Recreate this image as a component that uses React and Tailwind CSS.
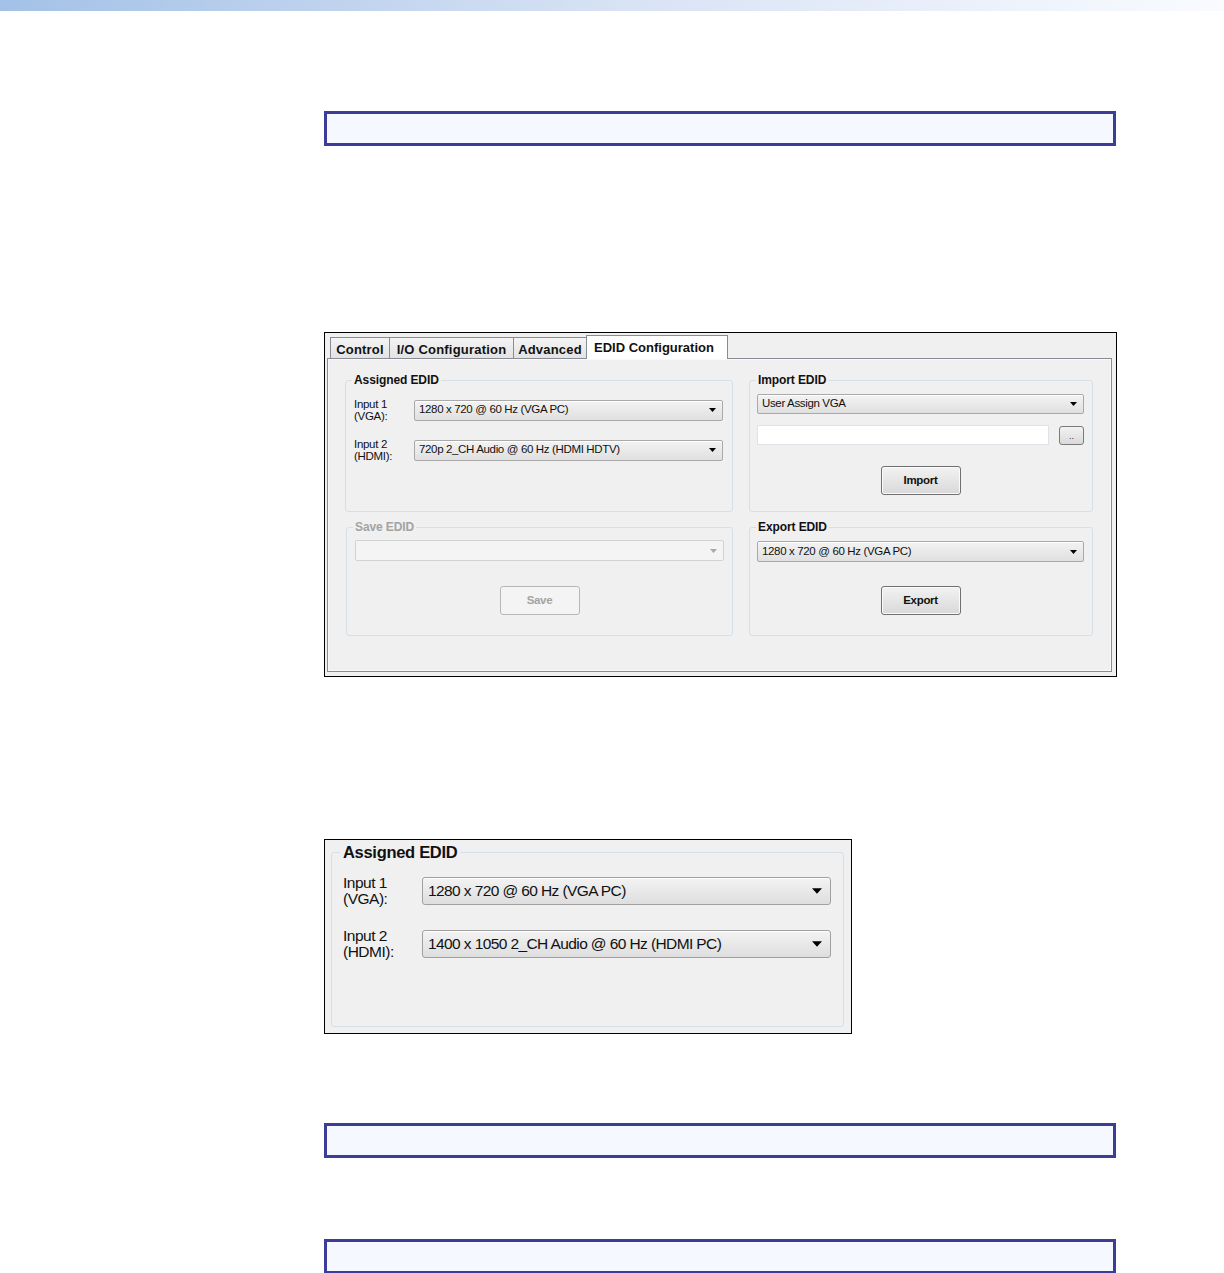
import React from "react";

const font = "font-['Liberation_Sans',Arial,sans-serif]";

function Arrow({ color = "#000", w = 7, h = 4 }) {
  return (
    <svg width={w} height={h} viewBox="0 0 7 4" className="shrink-0">
      <path d="M0 0 H7 L3.5 4 Z" fill={color} />
    </svg>
  );
}

function Combo({ text, h = "h-[21px]", disabled }) {
  if (disabled) {
    return (
      <div className={`${h} border border-[#d2d2d2] rounded-[2px] bg-[#f4f4f4] flex items-center justify-end pr-[6px]`}>
        <Arrow color="#a8a8a8" />
      </div>
    );
  }
  return (
    <div className={`${h} border border-[#a9a9a9] rounded-[2px] bg-linear-to-b from-[#f3f3f3] to-[#e0e0e0] flex items-center pl-[4px] pr-[6px] text-[11.5px] tracking-[-0.35px] text-[#111] shadow-[inset_0_1px_0_#fff]`}>
      <span className="flex-1 whitespace-nowrap">{text}</span>
      <Arrow />
    </div>
  );
}

function BigCombo({ text }) {
  return (
    <div className="h-[28px] border border-[#a0a0a0] rounded-[3px] bg-linear-to-b from-[#f3f3f3] to-[#dedede] flex items-center pl-[5px] pr-[8px] text-[15.5px] tracking-[-0.6px] text-[#111] shadow-[inset_0_1px_0_#fff]">
      <span className="flex-1 whitespace-nowrap">{text}</span>
      <Arrow w={10} h={6} />
    </div>
  );
}

function Btn({ label, disabled }) {
  if (disabled) {
    return (
      <div className="w-[80px] h-[29px] mx-auto border border-[#b5b8bb] rounded-[3px] bg-[#f4f4f4] flex items-center justify-center text-[11.5px] font-bold tracking-[-0.3px] text-[#a3a3a3]">
        {label}
      </div>
    );
  }
  return (
    <div className="w-[80px] h-[29px] mx-auto border border-[#707070] rounded-[3px] bg-linear-to-b from-[#f2f2f2] to-[#d9d9d9] flex items-center justify-center text-[11.5px] font-bold tracking-[-0.3px] text-[#111] shadow-[inset_0_0_0_1px_#fbfbfb]">
      {label}
    </div>
  );
}

function Group({ title, disabled, className, children }) {
  return (
    <fieldset className={`min-w-0 border border-[#d5dfe5] rounded-[3px] px-[8px] ${className}`}>
      <legend className={`ml-[-2px] px-[2px] text-[12px] leading-[14px] font-bold tracking-[-0.1px] ${disabled ? "text-[#a3a3a3]" : "text-[#111]"}`}>
        {title}
      </legend>
      {children}
    </fieldset>
  );
}

function InputRow({ l1, l2, value }) {
  return (
    <div className="grid grid-cols-[60px_1fr] items-center h-[24px]">
      <div className="text-[11.5px] leading-[12px] tracking-[-0.3px] text-[#111]">
        <div>{l1}</div>
        <div>{l2}</div>
      </div>
      <Combo text={value} />
    </div>
  );
}

function Tab({ label, active, w }) {
  if (active) {
    return (
      <div className={`relative z-10 -mb-px h-[24px] -ml-px ${w} border border-b-0 border-[#898c95] bg-white pl-[7px] pt-[4px] text-[13px] leading-[15px] font-bold text-[#111] whitespace-nowrap`}>
        {label}
      </div>
    );
  }
  return (
    <div className={`h-[21px] -ml-px first:ml-0 ${w} border border-b-0 border-[#898c95] bg-linear-to-b from-[#f4f4f4] to-[#e3e3e3] pt-[4px] text-center text-[13px] leading-[15px] font-bold tracking-[0.2px] text-[#111] whitespace-nowrap`}>
      {label}
    </div>
  );
}

function Note() {
  return <div className="w-[792px] h-[35px] border-[3px] border-[#3b3d99] bg-[#f5f9ff]" />;
}

export default function App() {
  return (
    <div className={`w-[1224px] h-[1273px] bg-white overflow-hidden ${font}`}>
      <div className="h-[11px] bg-linear-to-r from-[#a3c1e7] via-[#d7e2f4] to-[#f9fbff]" />

      <div className="ml-[324px] flex flex-col">
        <div className="mt-[100px]">
          <Note />
        </div>

        {/* screenshot: EDID Configuration tab */}
        <div className="mt-[186px] w-[793px] h-[345px] border border-black bg-[#f0f0f0] pt-[2px] pl-[2px] pr-[4px]">
          <div className="flex items-end h-[23px] pl-[3px]">
            <Tab label="Control" w="w-[60px]" />
            <Tab label="I/O Configuration" w="w-[125px]" />
            <Tab label="Advanced" w="w-[74px]" />
            <Tab label="EDID Configuration" w="w-[142px]" active />
          </div>
          <div className="h-[314px] border border-[#898c95] bg-[#f0f0f0] grid grid-cols-[388px_344px] gap-x-[16px] gap-y-[8px] content-start pl-[17px] pt-[14px] shadow-[inset_0_0_0_1px_#f9f9f9]">
            <Group title="Assigned EDID" className="h-[139px]">
              <div className="mt-[11px] flex flex-col gap-[16px] pr-[1px]">
                <InputRow l1="Input 1" l2="(VGA):" value="1280 x 720 @ 60 Hz (VGA PC)" />
                <InputRow l1="Input 2" l2="(HDMI):" value="720p 2_CH Audio @ 60 Hz (HDMI HDTV)" />
              </div>
            </Group>

            <Group title="Import EDID" className="h-[139px]">
              <div className="mt-[7px] -ml-px">
                <Combo text="User Assign VGA" h="h-[20px]" />
                <div className="mt-[11px] flex items-center gap-[10px]">
                  <div className="flex-1 min-w-0 h-[20px] border border-[#dfe3e8] bg-white" />
                  <div className="w-[25px] h-[19px] border border-[#7a7a7a] rounded-[3px] bg-linear-to-b from-[#f2f2f2] to-[#dadada] flex items-end justify-center pb-[3px] text-[9px] leading-[9px] text-[#333]">
                    ..
                  </div>
                </div>
                <div className="mt-[21px]">
                  <Btn label="Import" />
                </div>
              </div>
            </Group>

            <Group title="Save EDID" disabled className="h-[116px] ml-px">
              <div className="mt-[6px]">
                <Combo disabled />
                <div className="mt-[25px]">
                  <Btn label="Save" disabled />
                </div>
              </div>
            </Group>

            <Group title="Export EDID" className="h-[116px]">
              <div className="mt-[7px] -ml-px">
                <Combo text="1280 x 720 @ 60 Hz (VGA PC)" />
                <div className="mt-[24px]">
                  <Btn label="Export" />
                </div>
              </div>
            </Group>
          </div>
        </div>

        {/* screenshot: Assigned EDID detail */}
        <div className="mt-[162px] w-[528px] h-[195px] border border-black bg-[#f0f0f0] pt-[3px] pl-[6px] pr-[7px]">
          <fieldset className="h-[184px] min-w-0 border border-[#d5dfe5] rounded-[3px] pl-[11px] pr-[12px]">
            <legend className="ml-[-3px] px-[3px] text-[16.5px] leading-[18px] font-bold tracking-[-0.3px] text-[#111]">
              Assigned EDID
            </legend>
            <div className="mt-[14px] flex flex-col gap-[21px]">
              <div className="grid grid-cols-[79px_1fr] items-center h-[32px]">
                <div className="text-[15.5px] leading-[16px] tracking-[-0.5px] text-[#111]">
                  <div>Input 1</div>
                  <div>(VGA):</div>
                </div>
                <BigCombo text="1280 x 720 @ 60 Hz (VGA PC)" />
              </div>
              <div className="grid grid-cols-[79px_1fr] items-center h-[32px]">
                <div className="text-[15.5px] leading-[16px] tracking-[-0.5px] text-[#111]">
                  <div>Input 2</div>
                  <div>(HDMI):</div>
                </div>
                <BigCombo text="1400 x 1050 2_CH Audio @ 60 Hz (HDMI PC)" />
              </div>
            </div>
          </fieldset>
        </div>

        <div className="mt-[89px]">
          <Note />
        </div>
        <div className="mt-[81px]">
          <Note />
        </div>
      </div>
    </div>
  );
}
